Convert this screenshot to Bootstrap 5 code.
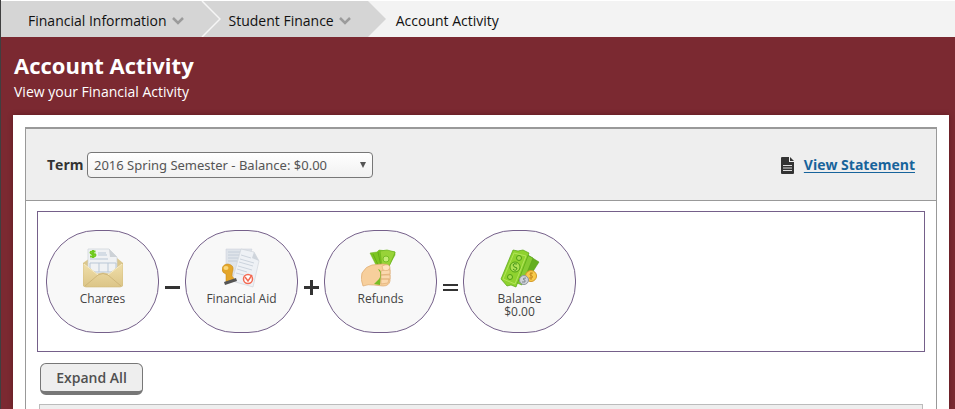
<!DOCTYPE html>
<html lang="en">
<head>
<meta charset="utf-8">
<meta name="viewport" content="width=device-width, initial-scale=1">
<title>Account Activity</title>
<link href="https://cdn.jsdelivr.net/npm/bootstrap@5.3.0/dist/css/bootstrap.min.css" rel="stylesheet">
<style>
body{font-family:"Open Sans","Noto Sans",sans-serif;font-size:14px;line-height:20px;color:#333;background:#7b2931;border-left:1px solid #3f3f40}
.crumbs{height:37px;border-top:1px solid #fff;background:#f3f3f3}
.crumbs li{height:36px}
.crumbs a,.crumbs span{color:#111;text-decoration:none}
.crumb-link{background:#d5d5d5;padding-top:3px}
.crumb-first{padding-left:27px;padding-right:16px}
.crumb-second{padding-left:8px;padding-right:16px}
.crumb-current{padding-left:10px;padding-top:3px}
.page-head{padding:15px 13px 10px}
.page-head h1{font-size:22px;line-height:27px}
.page-head p{line-height:26px}
.sheet{margin:0 6px 0 12px;padding:12px 12px 0;box-shadow:0 0 5px rgba(40,0,5,.35)}
.panel{border:1px solid #999;border-top-width:2px;border-bottom:0}
.panel-top{background:#eee;border-bottom:1px solid #999;padding:23px 21px 22px 21px}
.panel-top label{width:40px}
.term{width:286px;height:26px;font-family:"Noto Sans",sans-serif;font-size:13px;line-height:18px;color:#555;border:1px solid #777;border-radius:4px;padding:2px 6px;appearance:none;background:url("data:image/svg+xml,%3Csvg xmlns='http://www.w3.org/2000/svg' width='6' height='6'%3E%3Cpath d='M0 0h6L3 6z' fill='%23555'/%3E%3C/svg%3E") no-repeat right 6px center,linear-gradient(#fff,#f1f1f1)}
.statement{color:#17639b;text-underline-offset:2px}
.panel-body{padding:10px 11px 0}
.summary{border:1px solid #75608a;padding:18px 8px}
.bubble{width:113px;height:103px;border:1px solid #75608a;border-radius:50px;background:#f8f8f8;font-size:12px;line-height:13px;color:#444;padding-top:17px}
.bubble svg{display:block;margin:0 auto 4px}
.clipped{height:11px;overflow:hidden}
.operator{width:26px;padding-top:11px}
.operator svg{display:block;margin:0 auto}
.expand{margin:11px 0 0 3px;width:103px;height:32px;background:#eee;color:#505050;border:1px solid #777;border-bottom-width:4px;border-radius:6px;font-weight:600;padding:0}
.results{margin:9px 2px 0;border:1px solid #bbb;border-bottom:0;background:#eee}
</style>
<script src="https://cdn.jsdelivr.net/npm/bootstrap@5.3.0/dist/js/bootstrap.bundle.min.js"></script>
</head>
<body class="d-flex flex-column vh-100 overflow-hidden">
<nav class="crumbs flex-shrink-0" aria-label="Breadcrumb">
<ol class="list-unstyled d-flex m-0">
<li class="d-flex"><a href="#" class="crumb-link crumb-first d-flex align-items-center">Financial Information<svg class="ms-1" width="14" height="10" viewBox="0 0 14 10" fill="none" stroke="#9b9b9b" stroke-width="2.5"><path d="M2 2l5 5 5-5"/></svg></a>
<svg width="20" height="36" viewBox="0 0 20 36"><path fill="#d5d5d5" d="M0 0h20v36H0z"/><path d="M1 0l18 18L1 36" fill="none" stroke="#f6f6f6" stroke-width="1.5"/></svg></li>
<li class="d-flex"><a href="#" class="crumb-link crumb-second d-flex align-items-center">Student Finance<svg class="ms-1" width="14" height="10" viewBox="0 0 14 10" fill="none" stroke="#9b9b9b" stroke-width="2.5"><path d="M2 2l5 5 5-5"/></svg></a>
<svg width="18" height="36" viewBox="0 0 18 36"><path fill="#d5d5d5" d="M0 0l18 18L0 36z"/></svg></li>
<li class="crumb-current d-flex align-items-center"><span aria-current="page">Account Activity</span></li>
</ol>
</nav>
<header class="page-head text-white flex-shrink-0">
<h1 class="fw-bold m-0">Account Activity</h1>
<p class="m-0">View your Financial Activity</p>
</header>
<main class="sheet bg-white flex-grow-1 d-flex flex-column">
<section class="panel flex-grow-1 d-flex flex-column">
<div class="panel-top d-flex justify-content-between align-items-center">
<div class="d-flex align-items-center">
<label for="term" class="fw-bold">Term</label>
<select id="term" class="term"><option>2016 Spring Semester - Balance: $0.00</option></select>
</div>
<a href="#" class="statement fw-bold d-flex align-items-center"><svg width="23" height="17" viewBox="0 0 23 17"><path fill="#333" d="M1 0h7v5h5v11q0 1-1 1H1q-1 0-1-1V1q0-1 1-1zM9 0l4 4H9z"/><path d="M2 8.500h9M2 11h9M2 13.500h9" stroke="#ddd"/></svg>View Statement</a>
</div>
<div class="panel-body flex-grow-1 d-flex flex-column">
<div class="summary d-flex align-items-center">
<div class="bubble text-center">
<svg width="40" height="40" viewBox="0 0 40 40"><defs><linearGradient id="env" x2="0" y2="1"><stop stop-color="#f0dfab"/><stop offset="1" stop-color="#dcc587"/></linearGradient></defs><path fill="#dbc78e" d="M0 15l7-5h27l6 5v20H0z"/><path fill="#f0f2f4" stroke="#ccd2d8" stroke-width=".7" d="M5 1h21l8 8v22H5z"/><path fill="#cdd2d7" d="M26 1l8 8h-7z"/><path stroke="#b9c7d6" fill="none" d="M15 5h8M15 7h9M7 11h18M7 15h26v9H7zM16 15v9M25 15v9"/><path fill="none" stroke="#6fc91f" stroke-width="2" d="M12.500 3.500H9q-1.500 0-1.500 1T9 6h2q1.500 0 1.500 1T11 8.500H7M10 2v8"/><path fill="url(#env)" stroke="#d0b978" stroke-width=".6" d="M0 15l14 11 6-1 6 1 14-11v21q0 3-3 3H3q-3 0-3-3z"/><path fill="none" stroke="#f8edc9" d="M1 16l14 11M39 16L25 27"/><path fill="none" stroke="#c9b072" stroke-width=".8" d="M2 38l13-11q5-3 10 0l13 11"/></svg>
<div class="clipped">Charges</div>
</div>
<div class="operator"><svg width="16" height="16" viewBox="0 0 16 16"><path fill="#333" d="M1 7h15v3H1z"/></svg></div>
<div class="bubble text-center">
<svg width="40" height="40" viewBox="0 0 40 40"><path fill="#dfe4ea" stroke="#c8ced8" stroke-width=".5" d="M4 1h26l-9 27-17-1z"/><path stroke="#bcc6d5" stroke-width=".8" d="M6 4h13M6 7h11M6 10h10M6 13h9"/><path fill="#eef1f5" stroke="#cbd0d7" stroke-width=".6" d="M19 1l13 3 5 9-6 26-21-6z"/><path fill="#cfd5dc" d="M32 4l5 9-7-3z"/><path stroke="#c3cbd6" stroke-width=".8" d="M19 7l10 3M18 11l14 4M17 14l14 4M16 18l14 4M15 21l10 3M14 25l8 2"/><circle cx="26" cy="31" r="4.500" fill="#fff" stroke="#f36a53" stroke-width="1.500"/><path fill="none" stroke="#f36a53" stroke-width="1.500" d="M23 29l3 4 4-6"/><path fill="#e4a62a" stroke="#c38212" stroke-width=".5" d="M0 21q1-5 6-5 6 1 5 6-1 3-1 6l3 4-9 3v-9q-4-1-4-5z"/><ellipse cx="4" cy="20" rx="2.500" ry="2" fill="#fbd87c"/><path fill="#555" d="M2 34l12-4 1 3-12 4z"/></svg>
<div>Financial Aid</div>
</div>
<div class="operator"><svg width="16" height="16" viewBox="0 0 16 16"><path fill="#333" d="M7 1h3v6h6v3h-6v6H7v-6H1V7h6z"/></svg></div>
<div class="bubble text-center">
<svg width="40" height="40" viewBox="0 0 40 40"><path fill="#7cc521" stroke="#69ae19" stroke-width=".5" d="M9 5l7-1 2-2 8 1 8 1v3L24 25l-6-2z"/><path fill="#98d338" stroke="#6bb51d" stroke-width=".7" d="M19 3l7-1 8 2-1 3-6 14-6-2z"/><circle cx="25" cy="11" r="3" fill="#c4eb75" stroke="#75bd25"/><path stroke="#67ac18" d="M12 6l7 15M17 4l3 14"/><path fill="#f7cf9c" stroke="#dca96f" stroke-width=".7" d="M1 25q4-7 10-8l10-1q8 0 8 5v12q-1 5-7 5l-9-1q-6-1-11 1-3-7-1-13z"/><path fill="#77bc24" d="M17 21q4 5 1 10l-5 5 6 1 1-9q1-6-3-7z"/><path fill="#fbd9ae" stroke="#dca96f" stroke-width=".6" d="M20 23q4-2 9-1v4l-9 1zM20 27h9v4h-9zM20 31h8l-1 4-7 1z"/><path fill="#ffe3be" stroke="#dca96f" stroke-width=".6" d="M21 18q7-3 8 1-1 5-7 3z"/></svg>
<div>Refunds</div>
</div>
<div class="operator"><svg width="16" height="16" viewBox="0 0 16 16"><path fill="#333" d="M1 5h15v2H1zM1 10h15v2H1z"/></svg></div>
<div class="bubble text-center">
<svg width="40" height="40" viewBox="0 0 40 40"><path fill="#64ae1e" stroke="#4b9310" stroke-width=".5" d="M23 4l16 10-14 22-15-9z"/><path fill="#86cb32" stroke="#56a314" stroke-width=".6" d="M19 3l14 7-11 27-15-6z"/><path fill="#8fd22f" stroke="#54a411" stroke-width=".7" d="M13 2l5 1 5-1 6 3-13 34-5-2-4 1-6-7z"/><path fill="none" stroke="#b2e45a" d="M14 5l12 3-11 28-12-5z"/><circle cx="15" cy="19" r="5" fill="#aee054" stroke="#52a115"/><path fill="none" stroke="#459419" d="M17 16q-4-1-4 1t4 3q-1 4-4 1"/><circle cx="19" cy="10" r="2.500" fill="#a7dc50" stroke="#50a012"/><circle cx="10" cy="29" r="2.500" fill="#a7dc50" stroke="#50a012"/><circle cx="31" cy="28" r="5.500" fill="#f8ca4b" stroke="#d39826"/><path stroke="#c98d20" fill="none" d="M33 25q-4 0-3 2 4 1 2 3h-3M31 24v8"/><circle cx="24" cy="32" r="4.500" fill="#ced2d7" stroke="#8f969f"/><path stroke="#7d858f" fill="none" d="M26 30q-3 0-3 1 3 1 2 3h-3"/></svg>
<div>Balance<br>$0.00</div>
</div>
</div>
<button type="button" class="expand flex-shrink-0">Expand All</button>
<div class="results flex-grow-1"></div>
</div>
</section>
</main>
</body>
</html>
